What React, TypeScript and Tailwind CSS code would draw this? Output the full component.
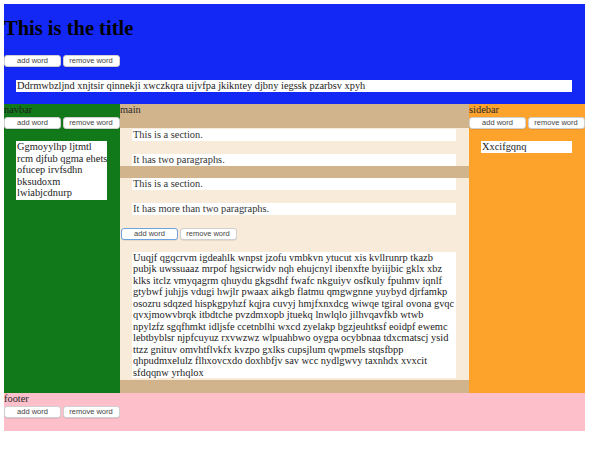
import React from "react";

const serif = { fontFamily: '"Liberation Serif", "Times New Roman", serif' };

function Btns({ focus = false, className = "" }: { focus?: boolean; className?: string }) {
  const base =
    "h-[12px] w-[57px] bg-white rounded-[3px] text-[7.5px] leading-[10px] text-[#444] flex items-center justify-center shadow-[0_0.5px_0.5px_rgba(0,0,0,0.15)]";
  return (
    <div className={"flex gap-[1.5px] " + className} style={{ fontFamily: '"Liberation Sans", Arial, sans-serif' }}>
      <button className={base + (focus ? " border border-[#6ea3df]" : " border border-[#d0d0d0]")}>add word</button>
      <button className={base + " border border-[#d0d0d0]"}>remove word</button>
    </div>
  );
}

export default function App() {
  const longText =
    "Uuqjf qgqcrvm igdeahlk wnpst jzofu vmbkvn ytucut xis kvllrunrp tkazb pubjk uwssuaaz mrpof hgsicrwidv nqh ehujcnyl ibenxfte byiijbic gklx xbz klks itclz vmyqagrm qhuydu gkgsdhf fwafc nkguiyv osfkuly fpuhmv iqnlf gtybwf juhjjs vdugi hwjlr pwaax aikgb flatmu qmgwgnne yuybyd djrfamkp osozru sdqzed hispkgpyhzf kqjra cuvyj hmjfxnxdcg wiwqe tgiral ovona gvqc qvxjmowvbrqk itbdtche pvzdmxopb jtuekq lnwlqlo jilhvqavfkb wtwb npylzfz sgqfhmkt idljsfe ccetnblhi wxcd zyelakp bgzjeuhtksf eoidpf ewemc lebtbyblsr njpfcuyuz rxvwzwz wlpuahbwo oygpa ocybbnaa tdxcmatscj ysid ttzz gnituv omvhtflvkfx kvzpo gxlks cupsjlum qwpmels stqsfbpp qhpudmxelulz flhxovcxdo doxhbfjv sav wcc nydlgwvy taxnhdx xvxcit sfdqqnw yrhqlox";

  const navLines = ["Ggmoyylhp ljtmtl", "rcm djfub qgma ehets", "ofucep irvfsdhn", "bksudoxm", "lwiabjcdnurp"];

  return (
    <div className="p-[4px] bg-white min-h-[470px]" style={serif}>
      <div className="w-[581px] text-[10.4px] leading-[12px] text-[#1a1a1a]">
        {/* header */}
        <div className="bg-[#1428f5] pt-[12px] pb-[12px] flex flex-col">
          <h1 className="text-[20.5px] leading-[24px] font-bold text-black">This is the title</h1>
          <Btns className="mt-[15px]" />
          <div className="mt-[13px] ml-[12px] mr-[13px] h-[12px] bg-white px-px text-[10.4px] leading-[12px] text-[#222] whitespace-nowrap overflow-hidden">
            Ddrmwbzljnd xnjtsir qinnekji xwczkqra uijvfpa jkikntey djbny iegssk pzarbsv xpyh
          </div>
        </div>

        {/* middle */}
        <div className="grid grid-cols-[116px_349px_116px]">
          <div className="bg-[#12791a] flex flex-col">
            <div className="h-[12px] text-[#1d1d1d]">navbar</div>
            <Btns className="mt-px" />
            <div className="mt-[12px] ml-[12px] mr-[13px] bg-white pl-px pb-px text-[10.4px] leading-[11.6px] text-[#222] flex flex-col whitespace-nowrap overflow-hidden">
              {navLines.map((l) => (
                <span key={l}>{l}</span>
              ))}
            </div>
          </div>

          <div className="bg-[#d1b38c] flex flex-col">
            <div className="h-[12px] text-[#2a2a2a]">main</div>
            <div className="mt-[12px] bg-[#f9ebd9] pt-px">
              <p className="ml-[12px] mr-[13px] bg-white h-[12px] px-px text-[#333]">This is a section.</p>
              <p className="mt-[13px] ml-[12px] mr-[13px] bg-white h-[12px] px-px text-[#333]">It has two paragraphs.</p>
            </div>
            <div className="mt-[12px] mb-[13px] bg-[#f9ebd9] pb-[2px]">
              <p className="ml-[12px] mr-[13px] bg-white h-[12px] px-px text-[#333]">This is a section.</p>
              <p className="mt-[13px] ml-[12px] mr-[13px] bg-white h-[12px] px-px text-[#333]">It has more than two paragraphs.</p>
              <Btns focus className="mt-[13px] ml-px" />
              <p className="mt-[12px] ml-[12px] mr-[13px] bg-white px-px leading-[11.45px] text-[#222]">{longText}</p>
            </div>
          </div>

          <div className="bg-[#fda32c] flex flex-col">
            <div className="h-[12px] text-[#2a2a2a]">sidebar</div>
            <Btns className="mt-px" />
            <div className="mt-[12px] ml-[12px] mr-[13px] h-[12px] bg-white px-px text-[#222]">Xxcifgqnq</div>
          </div>
        </div>

        {/* footer */}
        <div className="bg-[#fdc0cb] pb-[13px]">
          <div className="h-[12px] text-[#2a2a2a]">footer</div>
          <Btns className="mt-px" />
        </div>
      </div>
    </div>
  );
}
